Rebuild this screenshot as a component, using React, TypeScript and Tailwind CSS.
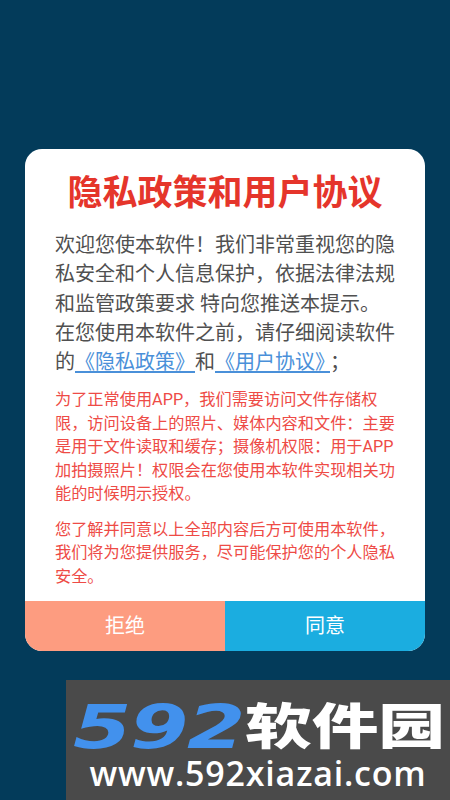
export default function App() {
  return (
    <div className="relative flex h-[800px] w-[450px] items-center justify-center overflow-hidden bg-[#033b5a] font-['Roboto','Noto_Sans_CJK_SC',sans-serif] [text-spacing-trim:space-all]">
      <div className="flex h-[502px] w-[400px] flex-col overflow-hidden rounded-[17px] bg-white">
        <h1 className="mt-[24px] h-[42px] text-center text-[35px] leading-[42px] font-bold whitespace-nowrap text-[#e5352b]">
          隐私政策和用户协议
        </h1>
        <div className="mt-[16px] px-[30px] text-[20px] leading-[29.3px] text-[#505050]">
          <p className="whitespace-nowrap">欢迎您使本软件！我们非常重视您的隐</p>
          <p className="whitespace-nowrap">私安全和个人信息保护，依据法律法规</p>
          <p className="whitespace-nowrap">和监管政策要求 特向您推送本提示。</p>
          <p className="whitespace-nowrap">在您使用本软件之前，请仔细阅读软件</p>
          <p className="whitespace-nowrap">
            的<span className="text-[#4a90d9] underline underline-offset-2">《隐私政策》</span>和
            <span className="text-[#4a90d9] underline underline-offset-2">
              《用户协议<span className="tracking-[-5px]">》</span>
            </span>
            ；
          </p>
        </div>
        <div className="mt-[11px] px-[30px] text-[16.2px] leading-[23.5px] text-[#ee4b46]">
          <p className="whitespace-nowrap">为了正常使用APP，我们需要访问文件存储权</p>
          <p className="whitespace-nowrap">限，访问设备上的照片、媒体内容和文件：主要</p>
          <p className="whitespace-nowrap">是用于文件读取和缓存；摄像机权限：用于APP</p>
          <p className="whitespace-nowrap">加拍摄照片！权限会在您使用本软件实现相关功</p>
          <p className="whitespace-nowrap">能的时候明示授权。</p>
          <p className="mt-[12px] whitespace-nowrap">您了解并同意以上全部内容后方可使用本软件，</p>
          <p className="whitespace-nowrap">我们将为您提供服务，尽可能保护您的个人隐私</p>
          <p className="whitespace-nowrap">安全。</p>
        </div>
        <div className="mt-auto flex h-[50px] text-[20px] text-white">
          <button className="flex-1 bg-[#fd9c80]">拒绝</button>
          <button className="flex-1 bg-[#1bade0]">同意</button>
        </div>
      </div>

      {/* watermark */}
      <div className="absolute top-[680px] left-[66px] flex h-[120px] w-[384px] flex-col bg-[#4a4a4a]">
        <div className="mt-[19px] flex h-[56px] items-center pl-[7px]">
          <span className="mr-[50px] w-[122px] origin-left scale-x-[1.4] font-['DejaVu_Sans'] text-[60px] leading-none font-bold tracking-[-1px] whitespace-nowrap text-[#4291ed] italic">
            592
          </span>
          <span className="origin-left scale-x-[1.36] text-[49px] leading-none font-black whitespace-nowrap text-white">
            软件园
          </span>
        </div>
        <div className="mt-[1px] text-center font-['Open_Sans'] text-[34px] leading-[34px] font-semibold tracking-[0.8px] whitespace-nowrap text-white">
          www.592xiazai.com
        </div>
      </div>
    </div>
  )
}
